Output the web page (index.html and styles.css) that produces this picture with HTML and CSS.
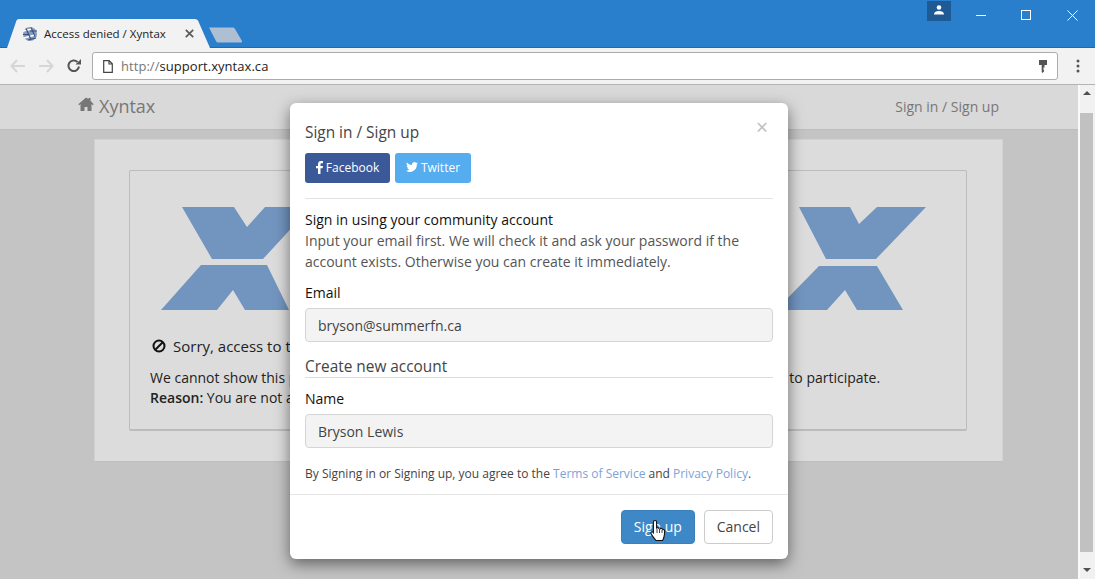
FILE: index.html
```html
<!DOCTYPE html>
<html lang="en">
<head>
<meta charset="utf-8">
<title>Access denied / Xyntax</title>
<link rel="stylesheet" href="styles.css">
</head>
<body>
<div class="browser">
  <header class="titlebar">
    <div class="tab">
      <svg class="tab-shape" width="204" height="29" viewBox="0 0 204 29"><path d="M0 29 L9.500 1.500 Q10 0 12 0 H188 Q190 0 191 1.500 L203 29Z" fill="#f2f2f2"/></svg>
      <svg class="favicon" width="16" height="16" viewBox="0 0 16 16"><circle cx="8" cy="8" r="7" fill="#8a9cba"/><path d="M1 5l9-2M2 12l11-3" stroke="#fff" stroke-width="1.300"/><path d="M4 2.500l5 11M9 1.500l4 9M1 8.500h6M8 5h7M6 14l8-2" stroke="#34507f" stroke-width="1.100"/></svg>
      <span class="tab-title">Access denied / Xyntax</span>
      <svg class="tab-close" width="9" height="9" viewBox="0 0 9 9"><path d="M.8.800l7.400 7.400M8.200.800L.8 8.200" stroke="#5a5a5a" stroke-width="1.700"/></svg>
    </div>
    <svg class="newtab" width="34" height="16" viewBox="0 0 34 16"><path d="M0 .5 H24 Q25.500 .5 26 2 L33 14 Q33.500 15.500 32 15.500 H9 Q7.500 15.500 7 14Z" fill="#aebfd3"/></svg>
    <div class="spacer"></div>
    <div class="profile"><svg width="12" height="10" viewBox="0 0 12 10"><circle cx="6" cy="2.500" r="2.300" fill="#fff"/><path d="M1 9.500 Q1 6 6 6 Q11 6 11 9.500Z" fill="#fff"/></svg></div>
    <div class="winbtn"><svg width="11" height="11" viewBox="0 0 11 11"><path d="M0 5.500h10" stroke="#fff"/></svg></div>
    <div class="winbtn"><svg width="11" height="11" viewBox="0 0 11 11"><rect x=".5" y=".5" width="9" height="9" fill="none" stroke="#fff"/></svg></div>
    <div class="winbtn"><svg width="11" height="11" viewBox="0 0 11 11"><path d="M.5.500l10 10M10.500.500l-10 10" stroke="#fff"/></svg></div>
  </header>

  <div class="toolbar">
    <svg class="navicon" width="16" height="14" viewBox="0 0 16 14"><path d="M7 1L1.500 7 7 13M2 7h13" fill="none" stroke="#d6d6d6" stroke-width="2"/></svg>
    <svg class="navicon" width="16" height="14" viewBox="0 0 16 14"><path d="M9 1l5.500 6L9 13M14 7H1" fill="none" stroke="#d6d6d6" stroke-width="2"/></svg>
    <svg class="navicon" width="16" height="16" viewBox="0 0 16 16"><path d="M13 8.500A5.300 5.300 0 1 1 11.500 4" fill="none" stroke="#555" stroke-width="2"/><path d="M9.500 6.500H15V1z" fill="#555"/></svg>
    <div class="omnibox">
      <svg class="pageicon" width="10" height="13" viewBox="0 0 10 13"><path d="M.7.700h5.500L9.300 3.800v8.500H.700zM6 .700v3.300h3.300" fill="#fff" stroke="#444" stroke-width="1.200"/></svg>
      <span class="url"><span class="scheme">http://</span>support.xyntax.ca</span>
      <svg class="keyicon" width="8" height="13" viewBox="0 0 8 13"><path d="M0 0h8v5H5.500v2.500h-1V10H5v1.500L3.500 13 2.700 12V5H0z" fill="#555"/></svg>
    </div>
    <svg class="menuicon" width="4" height="14" viewBox="0 0 4 14"><circle cx="2" cy="2" r="1.500" fill="#555"/><circle cx="2" cy="7" r="1.500" fill="#555"/><circle cx="2" cy="12" r="1.500" fill="#555"/></svg>
  </div>

  <div class="viewport">
    <main class="page">
      <nav class="navbar">
        <a class="brand"><svg class="home" width="16" height="14" viewBox="0 0 16 14"><path d="M8 .500L.300 7.200l.9 1L2.500 7.100V14h4v-4h3v4h4V7.100l1.300 1.100.9-1L12.500 3.800V1h-2v1.100z" fill="#777"/></svg>Xyntax</a>
        <a class="navlink">Sign in / Sign up</a>
      </nav>
      <section class="card">
        <div class="panel">
          <div class="logos">
            <svg width="150" height="104" viewBox="0 0 150 104"><path d="M21 0H73L86 20 104 0H150L102 52H51Z" fill="#7295bf"/><path d="M40 58H106L128 103H84L72 83 56 103H0Z" fill="#7295bf"/></svg>
            <svg width="150" height="104" viewBox="0 0 150 104"><path d="M23 0H74L83 17 101 0H150L100 52H50Z" fill="#7295bf"/><path d="M43 59H101L127 103H81L69 83 51 103H0Z" fill="#7295bf"/></svg>
          </div>
          <h2 class="denied"><svg class="ban" width="14" height="14" viewBox="0 0 14 14"><circle cx="7" cy="7" r="5.500" fill="none" stroke="#111" stroke-width="2"/><path d="M3 11L11 3" stroke="#111" stroke-width="2"/></svg>Sorry, access to this page is denied</h2>
          <p class="message">We cannot show this page to you. Please, sign in with an account that is allowed here, or is invited to participate.<br><strong>Reason:</strong> You are not allowed to view this page.</p>
        </div>
      </section>
    </main>
    <aside class="scrollbar">
      <span class="arrow-up"></span>
      <span class="thumb"></span>
      <span class="arrow-down"></span>
    </aside>

    <div class="modal">
      <div class="modal-body">
        <button class="close">×</button>
        <h3 class="modal-title">Sign in / Sign up</h3>
        <div class="socials">
          <a class="social fb"><svg width="7" height="13" viewBox="0 0 7 13"><path d="M2 13V7.200H0V5h2V3.300C2 1.200 3.200 0 5 0h2v2.200H5.700C4.700 2.200 4.500 2.700 4.500 3.500V5H7L6.600 7.200H4.500V13z" fill="#fff"/></svg>Facebook</a>
          <a class="social tw"><svg width="12" height="10" viewBox="0 0 12 10"><path d="M12 1.200c-.4.200-.9.300-1.400.4.500-.3.900-.8 1.100-1.400-.5.300-1 .5-1.600.6A2.500 2.500 0 0 0 5.900 3C3.900 2.900 2.100 1.900.9.400.200 1.500.600 3 1.700 3.700c-.4 0-.8-.1-1.100-.3 0 1.200.8 2.200 2 2.500-.4.100-.7.100-1.100 0 .3 1 1.200 1.700 2.300 1.700A5 5 0 0 1 0 8.700 7 7 0 0 0 10.800 2.500c.5-.3.900-.8 1.200-1.300z" fill="#fff"/></svg>Twitter</a>
        </div>
        <hr class="rule">
        <div class="intro">
          <h4 class="intro-title">Sign in using your community account</h4>
          <p>Input your email first. We will check it and ask your password if the account exists. Otherwise you can create it immediately.</p>
        </div>
        <div class="field">
          <label class="label" for="email">Email</label>
          <input class="input" id="email" value="bryson@summerfn.ca">
        </div>
        <div class="legend">Create new account</div>
        <div class="field field-name">
          <label class="label" for="name">Name</label>
          <input class="input" id="name" value="Bryson Lewis">
        </div>
        <p class="terms">By Signing in or Signing up, you agree to the <a>Terms of Service</a> and <a>Privacy Policy</a>.</p>
      </div>
      <div class="modal-footer">
        <button class="btn primary">Sign up</button>
        <button class="btn">Cancel</button>
      </div>
      <svg class="cursor" width="18" height="24" viewBox="0 0 18 24"><path d="M5 1.500c1 0 1.600.7 1.600 1.700V9c.8-.5 1.700-.3 2.100.3.800-.5 1.700-.3 2.100.4.900-.4 1.900 0 2.100.9.800-.2 1.700.3 1.700 1.400 0 4 -.5 7-2 9.500H6C4 19 2 17 1 14.500c-.5-1.300.8-2.200 1.900-1.300L3.400 13.800V3.200C3.400 2.200 4 1.500 5 1.500z" fill="#fff" stroke="#111" stroke-width="1.100"/><path d="M7 10v4M9.500 10v4M12 11v3" stroke="#111" stroke-width=".8"/></svg>
    </div>
  </div>
</div>
</body>
</html>
```
FILE: styles.css
```css
* { box-sizing: border-box; }
html, body { margin: 0; height: 100%; overflow: hidden; }
body { font-family: "Open Sans", sans-serif; font-size: 14px; color: #333; }
.browser { width: 1095px; height: 579px; display: flex; flex-direction: column; overflow: hidden; }

.titlebar { height: 48px; background: #2a7fcc; border-bottom: 1px solid #1f6aa8; display: flex; align-items: flex-start; padding-left: 7px; flex: none; }
.tab { position: relative; width: 204px; height: 29px; margin-top: 19px; display: flex; align-items: center; flex: none; }
.tab-shape { position: absolute; left: 0; top: 0; }
.favicon { position: relative; margin-left: 15px; flex: none; }
.tab-title { position: relative; font-size: 11.500px; color: #222; margin-left: 6px; width: 141px; white-space: nowrap; }
.tab-close { position: relative; flex: none; }
.newtab { margin: 27px 0 0 -2px; flex: none; }
.spacer { flex: 1; }
.profile { width: 24px; height: 20px; margin-top: 1px; background: #1e5b94; margin-right: 8px; display: flex; align-items: center; justify-content: center; padding-bottom: 3px; }
.winbtn { width: 45px; height: 30px; display: flex; align-items: center; justify-content: center; }
.winbtn:last-child { width: 46px; }

.toolbar { height: 37px; background: #f2f2f2; border-bottom: 1px solid #b4b4b4; display: flex; align-items: center; padding: 0 15px 0 10px; flex: none; gap: 12px; }
.navicon { flex: none; }
.omnibox { flex: 1; height: 28px; margin-left: -2px; margin-right: 2px; background: #fff; border: 1px solid #acacac; border-radius: 3px; display: flex; align-items: center; padding: 0 10px; }
.pageicon { flex: none; margin-right: 8px; }
.url { flex: 1; font-size: 13px; color: #222; letter-spacing: .05px; }
.scheme { color: #777; }
.keyicon { flex: none; }
.menuicon { flex: none; margin-left: 4px; }

.viewport { position: relative; flex: 1; display: flex; min-height: 0; }
.page { flex: 1; background: #c4c4c4; min-width: 0; }
.navbar { height: 45px; background: #d9d9d9; border-bottom: 1px solid #bdbdbd; display: flex; align-items: center; justify-content: space-between; padding: 0 79px 2px 78px; }
.brand { font-size: 18px; color: #777; display: flex; align-items: center; gap: 5px; }
.home { flex: none; margin-bottom: 4px; }
.navlink { font-size: 14px; color: #777; }
.card { width: 909px; height: 323px; margin: 9px 0 0 94px; background: #dcdcdc; border: 1px solid #d2d2d2; border-bottom-color: #bebebe; padding: 30px 35px 30px 34px; }
.panel { height: 261px; border: 1px solid #bcbcbc; border-bottom: 2px solid #bcbcbc; border-radius: 2px; padding: 36px 19px 0 20px; }
.logos { display: flex; justify-content: space-between; padding: 0 21px 0 11px; }
.logos svg { display: block; }
.denied { margin: 24px 0 0; font-size: 15px; font-weight: 400; color: #222; display: flex; align-items: center; gap: 7px; padding-left: 2px; height: 22px; white-space: nowrap; }
.ban { flex: none; }
.message { margin: 11px 0 0; font-size: 14px; line-height: 20px; color: #222; white-space: nowrap; }
.message strong { font-weight: 600; }

.scrollbar { width: 17px; background: #f1f1f1; border-left: 2px solid #fafafa; padding-right: 2px; flex: none; display: flex; flex-direction: column; align-items: center; }
.arrow-up { width: 0; height: 0; border: 4px solid transparent; border-top: 0; border-bottom: 4px solid #505050; margin-top: 6px; flex: none; }
.thumb { width: 13px; height: 439px; background: #c1c1c1; margin-top: 18px; flex: none; }
.arrow-down { width: 0; height: 0; border: 4px solid transparent; border-bottom: 0; border-top: 4px solid #505050; margin-top: 16px; flex: none; }

.modal { position: absolute; left: 290px; top: 18px; width: 498px; height: 456px; background: #fff; border-radius: 6px; box-shadow: 0 5px 15px rgba(0,0,0,.5); }
.modal-body { height: 391px; padding: 20px 15px 0; position: relative; }
.close { position: absolute; right: 20px; top: 14px; border: 0; background: none; padding: 0; font: 400 21px/21px "Open Sans", sans-serif; color: #bdbdbd; }
.modal-title { margin: 0; font-size: 15.400px; line-height: 20px; font-weight: 400; color: #444; }
.socials { display: flex; gap: 5px; margin-top: 10px; }
.social { height: 30px; border-radius: 3px; color: #fff; font-size: 12px; font-weight: 500; display: flex; align-items: center; gap: 3px; justify-content: center; padding-bottom: 2px; }
.fb { width: 85px; background: #3b5998; }
.tw { width: 76px; background: #55acee; }
.rule { margin: 15px 0 0; border: 0; border-top: 1px solid #e2e2e2; }
.intro { margin-top: 11px; font-size: 14px; line-height: 21px; color: #555; }
.intro-title { margin: 0; font-size: 14px; line-height: 20px; font-weight: 500; color: #111; }
.intro p { margin: 0; }
.field { margin-top: 11px; }
.label { display: block; font-size: 14px; line-height: 20px; font-weight: 500; color: #111; margin-bottom: 5px; }
.input { display: block; width: 100%; height: 34px; background: #f3f3f3; border: 1px solid #d5d5d5; border-radius: 4px; padding: 0 12px; font: 14px "Open Sans", sans-serif; color: #444; }
.legend { margin-top: 15px; font-size: 15.400px; line-height: 20px; color: #444; border-bottom: 1px solid #ddd; height: 21px; }
.field-name { margin-top: 11px; }
.terms { margin: 16px 0 0; font-size: 12px; line-height: 20px; color: #444; }
.terms a { color: #7ba3da; }
.modal-footer { height: 65px; border-top: 1px solid #e5e5e5; display: flex; justify-content: flex-end; align-items: flex-start; gap: 9px; padding: 15px 15px 0; }
.btn { height: 34px; padding: 0 12px 2px; border: 1px solid #ccc; border-radius: 4px; background: #fff; color: #444; font: 14px "Open Sans", sans-serif; white-space: nowrap; }
.primary { width: 74px; background: #3e88c8; border-color: #3a80bd; color: #fff; }
.cursor { position: absolute; left: 360px; top: 416px; }
```
